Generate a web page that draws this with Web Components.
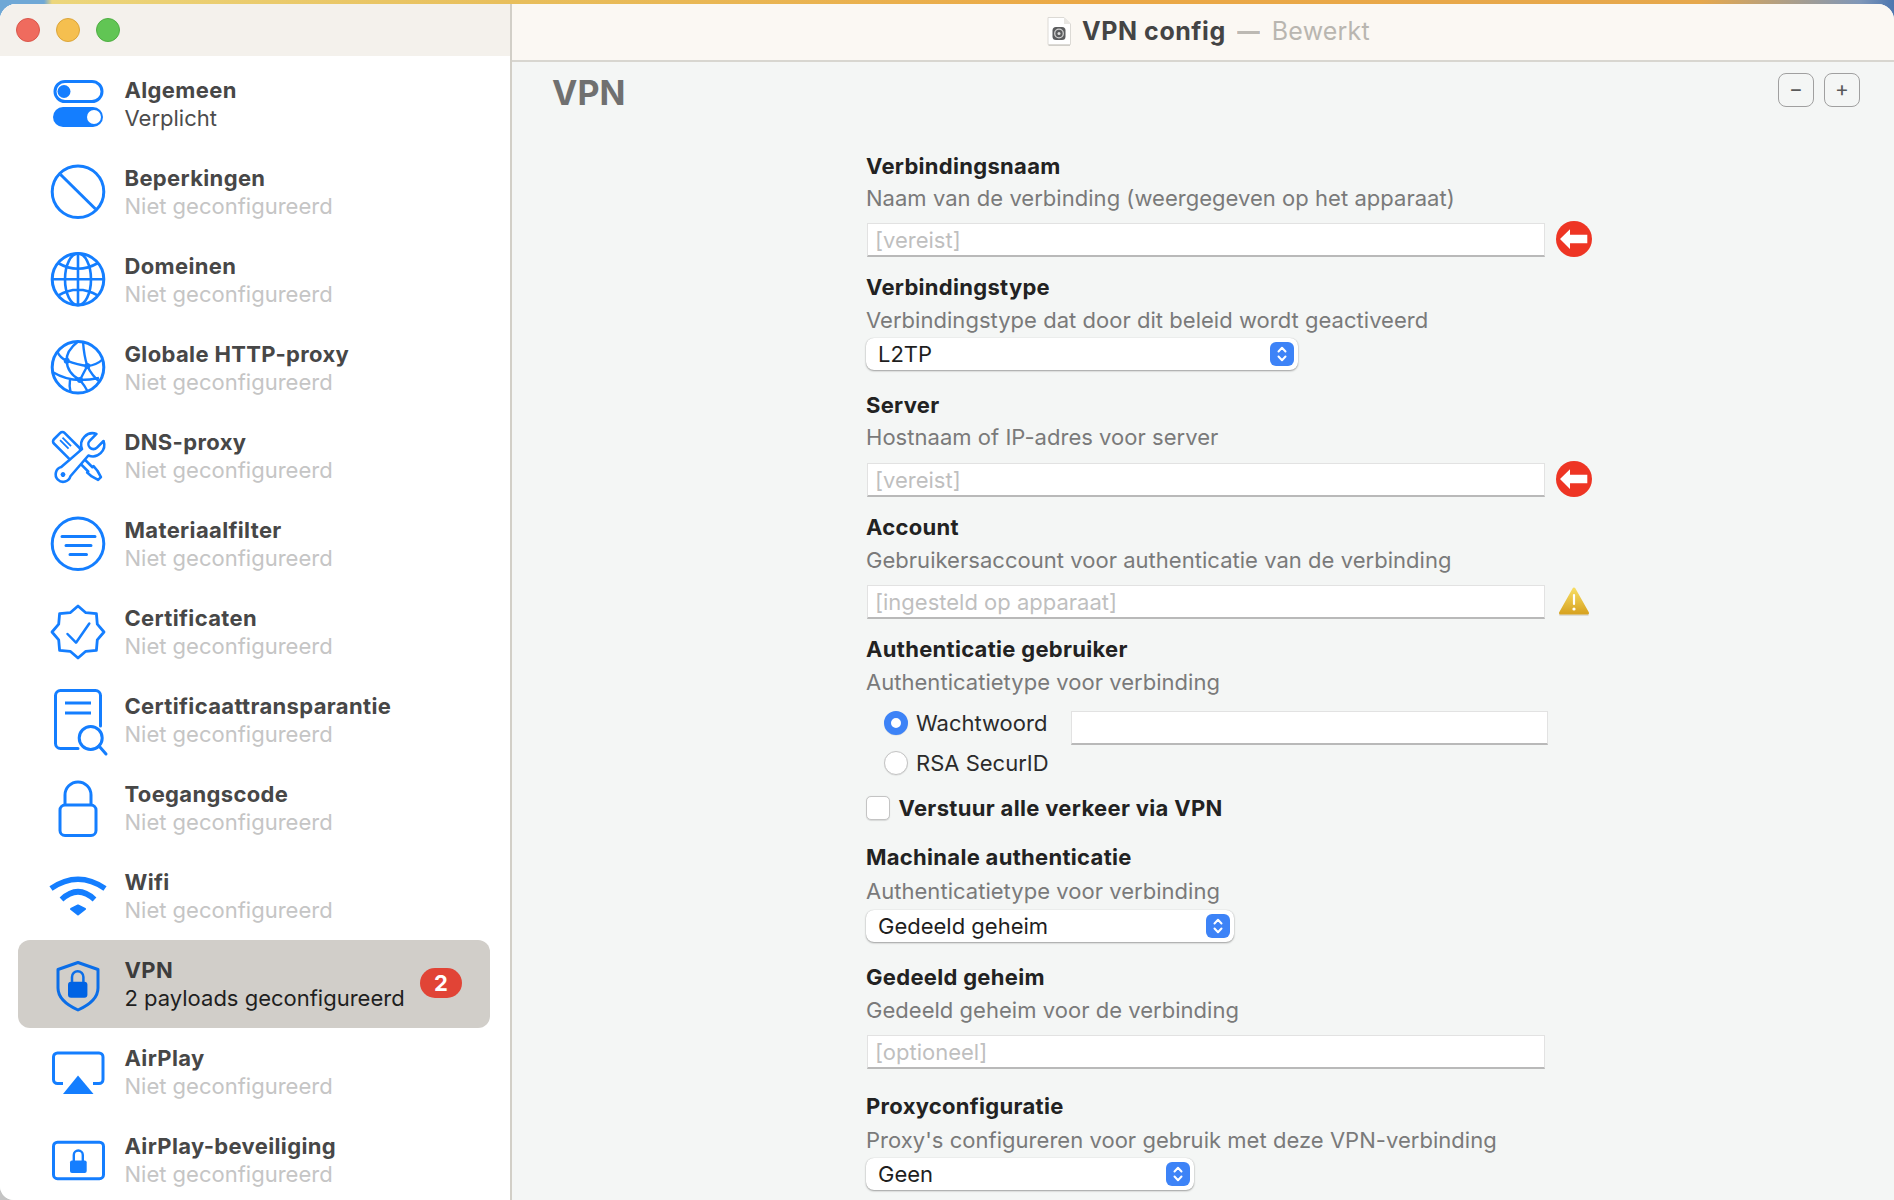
<!doctype html>
<html lang="nl">
<head>
<meta charset="utf-8">
<title>VPN config</title>
<style>
  html, body { margin: 0; height: 100%; overflow: hidden; }
  body {
    padding-top: 4px;
    box-sizing: border-box;
    font-family: Inter, "Liberation Sans", sans-serif;
    background: linear-gradient(90deg, #6fa8d6 0, #6fa8d6 44px, #ecd67c 52px, #e8bf5c 500px, #eba845 1100px, #e6a84c 1700px, #7f97b8 1860px, #4d77b0 1894px) 0 0 / 100% 24px no-repeat, #c4c4c4;
  }
</style>
</head>
<body>
<config-window>
  <profile-sidebar slot="sidebar">
    <side-item name="Algemeen" sub="Verplicht" set>
      <svg slot="icon" viewBox="0 0 60 60" fill="none" stroke="#147eff" stroke-width="3"><rect x="7" y="7.500" width="47" height="20" rx="10"/><circle cx="16" cy="17.500" r="6.500" fill="#147eff" stroke="none"/><rect x="5" y="33" width="50" height="20" rx="10" fill="#147eff" stroke="none"/><circle cx="46" cy="43" r="7" fill="#fff" stroke="none"/></svg>
    </side-item>
    <side-item name="Beperkingen" sub="Niet geconfigureerd">
      <svg slot="icon" viewBox="0 0 60 60" fill="none" stroke="#147eff" stroke-width="3"><circle cx="30" cy="29.700" r="25.800"/><path d="M12.500 12.500 47.500 47"/></svg>
    </side-item>
    <side-item name="Domeinen" sub="Niet geconfigureerd">
      <svg slot="icon" viewBox="0 0 60 60" fill="none" stroke="#147eff" stroke-width="2.600"><circle cx="30" cy="29.300" r="25.800" stroke-width="3"/><ellipse cx="30" cy="29.300" rx="13" ry="25.800"/><path d="M30 3.500V55M4 29.300H56M10 13Q30 24.500 50 13M10 45.600Q30 34 50 45.600"/></svg>
    </side-item>
    <side-item name="Globale HTTP-proxy" sub="Niet geconfigureerd">
      <svg slot="icon" viewBox="0 0 60 60" fill="none" stroke="#147eff" stroke-width="2.400"><circle cx="30" cy="29.300" r="25.800" stroke-width="3"/><path d="M30 3.500Q18 13 18.700 22.700 19 35 32 42 37 48 40 54M35 3.500Q36 18 39.300 28 44 38 52 44M9 13Q12 20 18.700 22.700 30 27 39.300 28 49 27 55 21M4.500 34Q18 42 32 42 42 42 51 40M39.300 28Q35 36 32 42M22 42Q21 48 22.500 54"/><circle cx="18.700" cy="22.700" r="3" fill="#147eff" stroke="none"/><circle cx="39.300" cy="28" r="3" fill="#147eff" stroke="none"/><circle cx="32" cy="42" r="3" fill="#147eff" stroke="none"/></svg>
    </side-item>
    <side-item name="DNS-proxy" sub="Niet geconfigureerd">
      <svg slot="icon" viewBox="0 0 60 60" fill="#fff" stroke="#147eff" stroke-width="2.600" stroke-linejoin="round">
        <g transform="translate(19,20) rotate(45)"><rect x="-14" y="-7.500" width="27" height="15" rx="3"/><path d="M13-3H33V-4.500L39-4 46-2V2L39 4 33 4.500V3H13Z"/><path d="M-9-2.700H3M-9 0.800H3" fill="none" stroke-width="1.800"/></g>
        <g transform="translate(15,48.500) rotate(-45)"><path d="M4-6.500 31.400-4.500A11.500 11.500 0 0 1 52.360-5L43-5A5 5 0 0 0 43 5L52.360 5A11.500 11.500 0 0 1 31.400 4.500L4 6.500A7.500 7.500 0 1 1 4-6.500Z"/><circle r="2.400" fill="#147eff" stroke="none"/></g>
      </svg>
    </side-item>
    <side-item name="Materiaalfilter" sub="Niet geconfigureerd">
      <svg slot="icon" viewBox="0 0 60 60" fill="none" stroke="#147eff" stroke-width="3"><circle cx="30" cy="29.700" r="25.800"/><path d="M14 22.500H47M18 31.500H43M22 40.500H38.500" stroke-linecap="round"/></svg>
    </side-item>
    <side-item name="Certificaten" sub="Niet geconfigureerd">
      <svg slot="icon" viewBox="0 0 60 60" fill="none" stroke="#147eff" stroke-width="2.800" stroke-linejoin="round" stroke-linecap="round"><path d="M30 4 37.800 10.700 48.400 11.600 49.300 22.200 56 30 49.300 37.800 48.400 48.400 37.800 49.300 30 56 22.200 49.300 11.600 48.400 10.700 37.800 4 30 10.700 22.200 11.600 11.600 22.200 10.700Z"/><path d="M19.500 32 28 40.700 41.300 21.500" stroke-width="2.500"/></svg>
    </side-item>
    <side-item name="Certificaattransparantie" sub="Niet geconfigureerd">
      <svg slot="icon" viewBox="0 0 60 60" fill="none" stroke="#147eff" stroke-width="3" stroke-linecap="round"><path d="M30 58.500H12.500A5 5 0 0 1 7.500 53.500V5.500A5 5 0 0 1 12.500 .5H47.500A5 5 0 0 1 52.500 5.500V36"/><path d="M17 13H43M17 23H43" stroke-linecap="butt"/><circle cx="42.700" cy="48" r="11.500"/><path d="M51 56 58 64"/></svg>
    </side-item>
    <side-item name="Toegangscode" sub="Niet geconfigureerd">
      <svg slot="icon" viewBox="0 0 60 60" fill="none" stroke="#147eff" stroke-width="3"><rect x="12" y="27" width="36" height="30.500" rx="5"/><path d="M17 27V17A13 13 0 0 1 43 17V27"/></svg>
    </side-item>
    <side-item name="Wifi" sub="Niet geconfigureerd">
      <svg slot="icon" viewBox="0 0 60 60" fill="none" stroke="#147eff" stroke-width="5.500"><path d="M3 22.500Q30 4 57 22.500M13.500 33.500Q30 18 46.500 33.500"/><path d="M23 43 30 39.500 37 43 30 48.500Z" fill="#147eff" stroke-width="2" stroke-linejoin="round"/></svg>
    </side-item>
    <side-item name="VPN" sub="2 payloads geconfigureerd" selected set badge="2">
      <svg slot="icon" viewBox="0 0 60 60" fill="none" stroke="#0b6ee8" stroke-width="3"><path d="M30 8.500 50 15.500V34Q50 47 30 56 10 47 10 34V15.500Z" stroke-linejoin="round"/><rect x="20" y="27.700" width="19.400" height="16" rx="3" fill="#0063e4" stroke="none"/><path d="M24 28V23A5.700 5.700 0 0 1 35.400 23V28" stroke-width="2.500"/></svg>
    </side-item>
    <side-item name="AirPlay" sub="Niet geconfigureerd">
      <svg slot="icon" viewBox="0 0 60 60" fill="none" stroke="#147eff" stroke-width="3"><path d="M15 41.500H9.500A4 4 0 0 1 5.500 37.500V15A4 4 0 0 1 9.500 11H51A4 4 0 0 1 55 15V37.500A4 4 0 0 1 51 41.500H45"/><path d="M30 33.500 45.500 52H15Z" fill="#147eff" stroke="none"/></svg>
    </side-item>
    <side-item name="AirPlay-beveiliging" sub="Niet geconfigureerd">
      <svg slot="icon" viewBox="0 0 60 60" fill="none" stroke="#147eff" stroke-width="3"><rect x="5.500" y="12.200" width="50" height="36.500" rx="4"/><rect x="22" y="30.500" width="16.700" height="12.500" rx="2" fill="#147eff" stroke="none"/><path d="M25.800 31V25A4.500 4.500 0 0 1 34.800 25V31" stroke-width="2.400"/></svg>
    </side-item>
  </profile-sidebar>

  <title-bar slot="titlebar" title-text="VPN config" state="Bewerkt"></title-bar>

  <payload-pane slot="main" heading="VPN">
    <form-field label="Verbindingsnaam" desc="Naam van de verbinding (weergegeven op het apparaat)" style="--top:0px;--mid:0px;--ctl:8px">
      <input-row><text-input hint="[vereist]"></text-input><status-icon kind="error"></status-icon></input-row>
    </form-field>
    <form-field label="Verbindingstype" desc="Verbindingstype dat door dit beleid wordt geactiveerd" style="--top:15px;--mid:1px;--ctl:1px">
      <pop-select value="L2TP" style="width:432px"></pop-select>
    </form-field>
    <form-field label="Server" desc="Hostnaam of IP-adres voor server" style="--top:20px;--mid:0px;--ctl:9px">
      <input-row><text-input hint="[vereist]"></text-input><status-icon kind="error"></status-icon></input-row>
    </form-field>
    <form-field label="Account" desc="Gebruikersaccount voor authenticatie van de verbinding" style="--top:15px;--mid:1px;--ctl:8px">
      <input-row><text-input hint="[ingesteld op apparaat]"></text-input><status-icon kind="warning"></status-icon></input-row>
    </form-field>
    <form-field label="Authenticatie gebruiker" desc="Authenticatietype voor verbinding" style="--top:15px;--mid:1px;--ctl:12px">
      <auth-options>
        <radio-option label="Wachtwoord" checked></radio-option>
        <text-input slot="password" style="width:477px;margin:0"></text-input>
        <radio-option slot="second" label="RSA SecurID"></radio-option>
      </auth-options>
    </form-field>
    <check-option label="Verstuur alle verkeer via VPN"></check-option>
    <form-field label="Machinale authenticatie" desc="Authenticatietype voor verbinding" style="--top:22px;--mid:2px;--ctl:2px">
      <pop-select value="Gedeeld geheim" style="width:368px"></pop-select>
    </form-field>
    <form-field label="Gedeeld geheim" desc="Gedeeld geheim voor de verbinding" style="--top:20px;--mid:1px;--ctl:8px">
      <input-row><text-input hint="[optioneel]"></text-input></input-row>
    </form-field>
    <form-field label="Proxyconfiguratie" desc="Proxy's configureren voor gebruik met deze VPN-verbinding" style="--top:22px;--mid:2px;--ctl:1px">
      <pop-select value="Geen" style="width:328px"></pop-select>
    </form-field>
  </payload-pane>
</config-window>

<script>
class ConfigWindow extends HTMLElement {
  constructor() {
    super();
    this.attachShadow({ mode: 'open' });
    this.shadowRoot.innerHTML = `
      <style>
        :host {
          display: grid;
          grid-template-columns: 512px 1fr;
          height: 1196px;
          border-radius: 16px 16px 0 14px;
          overflow: hidden;
          background: #f4f6f5;
        }
        .right { display: flex; flex-direction: column; min-width: 0; height: 1196px; overflow: hidden; }
      </style>
      <slot name="sidebar"></slot>
      <div class="right">
        <slot name="titlebar"></slot>
        <slot name="main"></slot>
      </div>`;
  }
}

class ProfileSidebar extends HTMLElement {
  constructor() {
    super();
    this.attachShadow({ mode: 'open' });
    this.shadowRoot.innerHTML = `
      <style>
        :host { display: block; height: 1196px; overflow: hidden; background: #fff; border-right: 2px solid #d2cfc7; box-sizing: border-box; }
        .top { height: 52px; background: #f4f1ec; display: flex; align-items: center; gap: 16px; padding-left: 16px; margin-right: -2px; position: relative; }
        .dot { width: 24px; height: 24px; border-radius: 50%; box-sizing: border-box; border: 1px solid; }
        .r { background: #ef6b5e; border-color: #d9574b; }
        .y { background: #f5bf4f; border-color: #dba53a; }
        .g { background: #61c554; border-color: #4fae43; }
        .list { padding: 4px 20px 0 18px; }
      </style>
      <div class="top"><span class="dot r"></span><span class="dot y"></span><span class="dot g"></span></div>
      <div class="list"><slot></slot></div>`;
  }
}

class SideItem extends HTMLElement {
  constructor() {
    super();
    this.attachShadow({ mode: 'open' });
    const badge = this.getAttribute('badge');
    this.shadowRoot.innerHTML = `
      <style>
        :host { display: flex; align-items: center; height: 88px; padding: 0 28px 0 30px; gap: 16.500px; border-radius: 12px; color: #474747; }
        :host([selected]) { background: #d1cec9; color: #3c3c3c; }
        ::slotted(svg) { width: 60px; height: 60px; overflow: visible; display: block; }
        .icon { width: 60px; height: 60px; flex: none; }
        .txt { flex: 1; min-width: 0; white-space: nowrap; }
        .name { font-size: 22px; line-height: 28px; font-weight: 700; letter-spacing: .35px; }
        .sub { font-size: 22px; line-height: 28px; color: #c5c5c5; }
        :host([set]) .sub { color: #4c4c4c; }
        :host([selected]) .sub { color: #1f1f1f; }
        .badge { width: 42px; height: 30px; border-radius: 15px; background: #e14436; color: #fff; font-size: 22px; font-weight: 700; line-height: 30px; text-align: center; margin-top: -2px; }
      </style>
      <div class="icon"><slot name="icon"></slot></div>
      <div class="txt">
        <div class="name">${this.getAttribute('name')}</div>
        <div class="sub">${this.getAttribute('sub')}</div>
      </div>
      ${badge ? `<div class="badge">${badge}</div>` : ''}`;
  }
}

class TitleBar extends HTMLElement {
  constructor() {
    super();
    this.attachShadow({ mode: 'open' });
    this.shadowRoot.innerHTML = `
      <style>
        :host { display: flex; align-items: center; justify-content: center; gap: 12px; padding: 0 0 2px 10px; box-sizing: border-box; background: #fbf8f3; height: 58px; border-bottom: 2px solid #d8d6d0; white-space: nowrap; }
        svg { width: 26px; height: 30px; display: block; }
        .t { font-size: 25px; font-weight: 700; letter-spacing: .55px; color: #444; margin-left: -2px; }
        .d { font-size: 25px; font-weight: 700; color: #bcb9b3; margin: 0 -1px 0 -2px; transform: scaleX(.9); }
        .s { font-size: 25px; color: #b9b6b0; letter-spacing: .2px; }
      </style>
      <svg viewBox="0 0 26 30"><path d="M2 1.500H18L24.500 8V28.500H2Z" fill="#fff" stroke="#dcdad5" stroke-linejoin="round"/><path d="M18 1.500V8H24.500Z" fill="#e8e6e2"/><path d="M2.500 29.500H24" stroke="#d0cec9"/><rect x="6.500" y="11" width="13" height="13" rx="3.500" fill="#5b5c5e"/><circle cx="13" cy="17.500" r="4.300" fill="none" stroke="#cfcfcf" stroke-width="1.300"/><circle cx="13" cy="17.500" r="1.500" fill="#dcdcdc"/></svg>
      <span class="t">${this.getAttribute('title-text')}</span>
      <span class="d">—</span>
      <span class="s">${this.getAttribute('state')}</span>`;
  }
}

class PayloadPane extends HTMLElement {
  constructor() {
    super();
    this.attachShadow({ mode: 'open' });
    this.shadowRoot.innerHTML = `
      <style>
        :host { display: block; flex: 1; padding: 11px 34px 0 40px; overflow: hidden; }
        header { display: flex; justify-content: space-between; align-items: flex-start; height: 40px; }
        h1 { margin: 0; font-size: 34px; line-height: 40px; font-weight: 700; color: #707070; }
        .btns { display: flex; gap: 10px; }
        button { width: 36px; height: 34px; padding: 0 0 2px; border: 1.500px solid #a0a0a0; border-radius: 8px; background: transparent; color: #5a5a5a; font: 400 21px/28px Inter, sans-serif; }
        .form { margin: 38px 0 0 314px; width: 740px; }
      </style>
      <header>
        <h1>${this.getAttribute('heading')}</h1>
        <div class="btns"><button>−</button><button>+</button></div>
      </header>
      <div class="form"><slot></slot></div>`;
  }
}

class FormField extends HTMLElement {
  constructor() {
    super();
    this.attachShadow({ mode: 'open' });
    this.shadowRoot.innerHTML = `
      <style>
        :host { display: block; margin-top: var(--top, 0); }
        .label { font-size: 22px; line-height: 32px; margin-top: -1px; font-weight: 700; letter-spacing: .3px; color: #222; }
        .desc { font-size: 22px; line-height: 32px; letter-spacing: .03px; margin-top: var(--mid, 0); color: #7a7a7a; margin-bottom: calc(var(--ctl, 8px) + 1px); }
      </style>
      <div class="label">${this.getAttribute('label')}</div>
      <div class="desc">${this.getAttribute('desc')}</div>
      <slot></slot>`;
  }
}

class InputRow extends HTMLElement {
  constructor() {
    super();
    this.attachShadow({ mode: 'open' });
    this.shadowRoot.innerHTML = `
      <style>:host { display: flex; align-items: center; gap: 11px; height: 34px; }</style>
      <slot></slot>`;
  }
}

class TextInput extends HTMLElement {
  constructor() {
    super();
    this.attachShadow({ mode: 'open' });
    const hint = this.getAttribute('hint') || '';
    this.shadowRoot.innerHTML = `
      <style>
        :host { display: block; box-sizing: border-box; width: 678px; height: 34px; margin-left: 1px; flex: none; background: #fff; border: 1px solid #e2e2e2; border-bottom: 2px solid #b9b9b9; padding-left: 7px; font-size: 22px; line-height: 32px; color: #bfbfbf; white-space: nowrap; }
      </style>
      ${hint}`;
  }
}

class StatusIcon extends HTMLElement {
  constructor() {
    super();
    this.attachShadow({ mode: 'open' });
    const error = `<svg viewBox="0 0 36 36"><circle cx="18" cy="18" r="18" fill="#ee3524"/><path d="M4 18 14 8.300V13.700H31.300V22.300H14V28Z" fill="#fff"/></svg>`;
    const warning = `<svg viewBox="0 0 36 36"><defs><linearGradient id="w" x1="0" y1="0" x2="0" y2="1"><stop offset="0" stop-color="#f6dc62"/><stop offset="1" stop-color="#d8a422"/></linearGradient></defs><path d="M18 6 31.500 30H4.500Z" fill="#dedcd5" transform="translate(0,1.500)" stroke="#dedcd5" stroke-width="3" stroke-linejoin="round"/><path d="M18 6 31.500 30H4.500Z" fill="url(#w)" stroke="url(#w)" stroke-width="3" stroke-linejoin="round"/><rect x="16.900" y="11" width="2.200" height="11" rx="1.100" fill="#fff"/><circle cx="18" cy="26" r="1.600" fill="#fff"/></svg>`;
    this.shadowRoot.innerHTML = `
      <style>
        :host { display: block; width: 36px; height: 36px; flex: none; margin-top: -2px; }
        svg { display: block; width: 36px; height: 36px; }
      </style>
      ${this.getAttribute('kind') === 'warning' ? warning : error}`;
  }
}

class PopSelect extends HTMLElement {
  constructor() {
    super();
    this.attachShadow({ mode: 'open' });
    this.shadowRoot.innerHTML = `
      <style>
        :host { display: flex; align-items: center; justify-content: space-between; box-sizing: border-box; height: 32px; padding: 0 4px 0 12px; background: #fff; border-radius: 8px; box-shadow: 0 1px 2px rgba(0,0,0,.35), 0 0 1px rgba(0,0,0,.2); font-size: 22px; color: #1e1e1e; white-space: nowrap; }
        .step { width: 24px; height: 24px; border-radius: 6px; background: #3d83f7; display: block; flex: none; }
      </style>
      <span>${this.getAttribute('value')}</span>
      <svg class="step" viewBox="0 0 24 24" fill="none" stroke="#fff" stroke-width="2" stroke-linecap="round" stroke-linejoin="round"><path d="M8.500 9.500 12 5.800 15.500 9.500M8.500 14.500 12 18.200 15.500 14.500"/></svg>`;
  }
}

class RadioOption extends HTMLElement {
  constructor() {
    super();
    this.attachShadow({ mode: 'open' });
    this.shadowRoot.innerHTML = `
      <style>
        :host { display: flex; align-items: center; gap: 8px; height: 24px; font-size: 22px; color: #2b2b2b; white-space: nowrap; }
        .dot { width: 24px; height: 24px; box-sizing: border-box; border-radius: 50%; background: #fff; border: 1px solid #c4c4c4; box-shadow: 0 .5px 1px rgba(0,0,0,.12); flex: none; }
        :host([checked]) .dot { border: 7.500px solid #3d83f7; }
      </style>
      <span class="dot"></span>${this.getAttribute('label')}`;
  }
}

class AuthOptions extends HTMLElement {
  constructor() {
    super();
    this.attachShadow({ mode: 'open' });
    this.shadowRoot.innerHTML = `
      <style>
        :host { display: grid; grid-template-columns: 187px 477px; grid-auto-rows: auto; row-gap: 6px; padding-left: 18px; align-items: start; }
        .second { grid-column: 1 / 3; }
      </style>
      <slot></slot>
      <slot name="password"></slot>
      <div class="second"><slot name="second"></slot></div>`;
  }
}

class CheckOption extends HTMLElement {
  constructor() {
    super();
    this.attachShadow({ mode: 'open' });
    this.shadowRoot.innerHTML = `
      <style>
        :host { display: flex; align-items: center; gap: 8.500px; height: 24px; margin-top: 21px; font-size: 22px; font-weight: 700; letter-spacing: .33px; color: #222; white-space: nowrap; }
        .box { width: 24px; height: 24px; box-sizing: border-box; border-radius: 5px; background: #fff; border: 1px solid #c4c4c4; box-shadow: 0 .5px 1px rgba(0,0,0,.12); flex: none; }
      </style>
      <span class="box"></span>${this.getAttribute('label')}`;
  }
}

customElements.define('config-window', ConfigWindow);
customElements.define('profile-sidebar', ProfileSidebar);
customElements.define('side-item', SideItem);
customElements.define('title-bar', TitleBar);
customElements.define('payload-pane', PayloadPane);
customElements.define('form-field', FormField);
customElements.define('input-row', InputRow);
customElements.define('text-input', TextInput);
customElements.define('status-icon', StatusIcon);
customElements.define('pop-select', PopSelect);
customElements.define('radio-option', RadioOption);
customElements.define('auth-options', AuthOptions);
customElements.define('check-option', CheckOption);
</script>
</body>
</html>
